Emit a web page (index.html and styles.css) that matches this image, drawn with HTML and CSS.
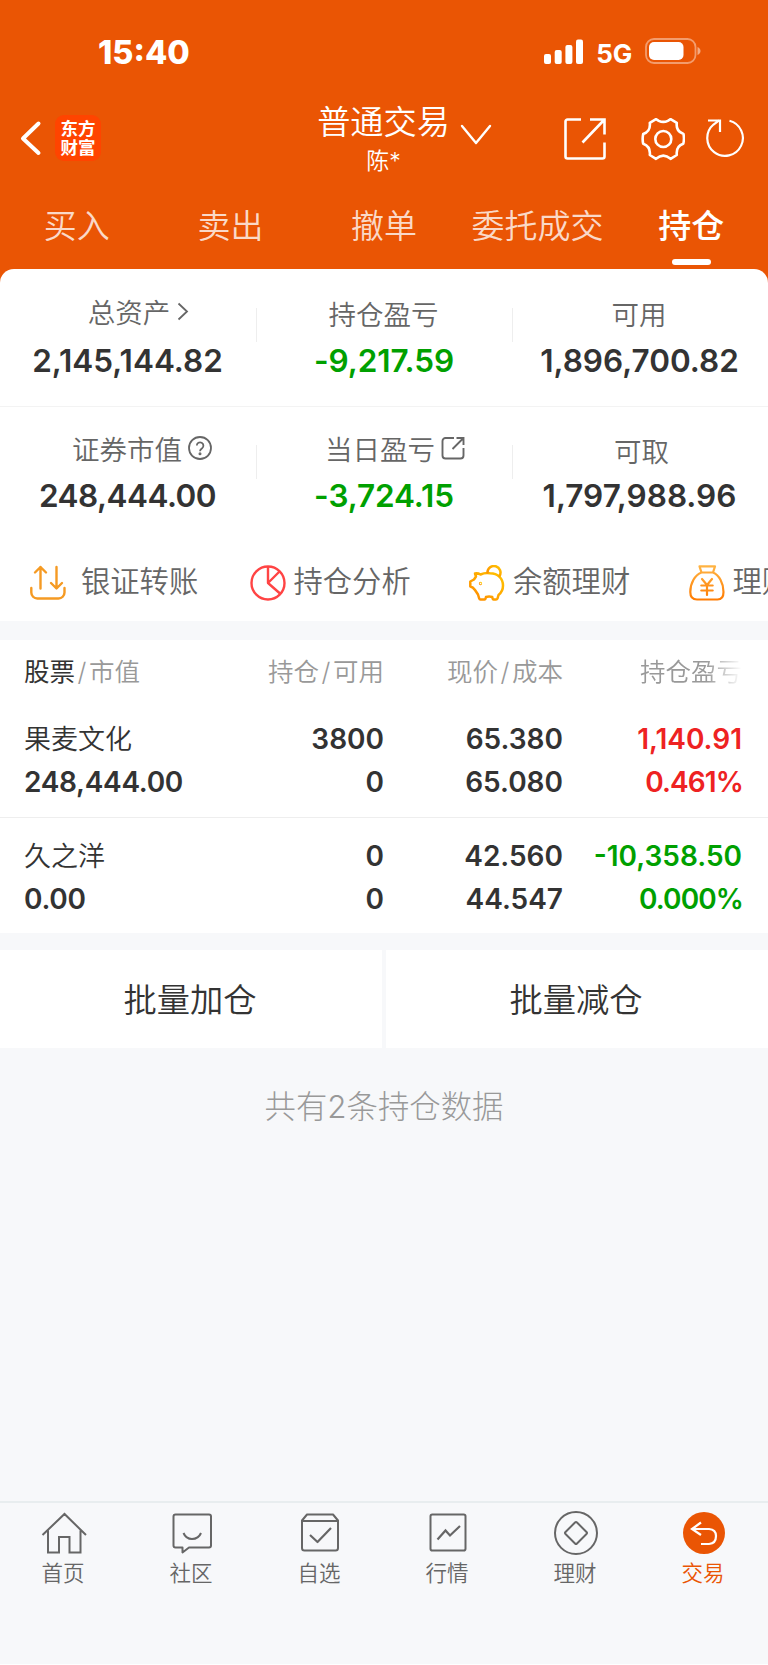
FILE: index.html
```html
<!DOCTYPE html>
<html lang="zh-CN">

<head>
  <meta charset="UTF-8">
  <title>普通交易 - 持仓</title>
  <link rel="stylesheet" href="styles.css">
</head>

<body>
  <div class="app">
    <header class="header">
      <div class="status">
        <span class="time">15:40</span>
        <div class="status-right">
          <svg class="signal" width="39" height="25" viewBox="0 0 39 25" fill="#fff">
            <rect x="0" y="15" width="7" height="10" rx="2" />
            <rect x="10.7" y="11" width="7" height="14" rx="2" />
            <rect x="21.4" y="6" width="7" height="19" rx="2" />
            <rect x="32" y="0.5" width="7" height="24.5" rx="2" />
          </svg>
          <span class="network">5G</span>
          <svg width="56" height="26" viewBox="0 0 56 26">
            <rect x="1" y="1" width="49.5" height="24" rx="8" fill="none" stroke="#fff" stroke-opacity=".42" stroke-width="1.8" />
            <rect x="4" y="4" width="34.5" height="18" rx="5" fill="#fff" />
            <path d="M52.5 9v8c4-1.500 4-6.500 0-8z" fill="#fff" fill-opacity=".5" />
          </svg>
        </div>
      </div>

      <nav class="navbar">
        <div class="nav-left">
          <svg width="22" height="36" viewBox="0 0 22 36" fill="none" stroke="#fff" stroke-width="4" stroke-linecap="round" stroke-linejoin="round">
            <path d="M18.500 3.500L3 18.500L18.500 33" />
          </svg>
          <div class="logo"><span>东方</span><span>财富</span></div>
        </div>
        <div class="nav-title">
          <div class="title">普通交易</div>
          <div class="user">陈*</div>
        </div>
        <svg class="caret" width="32" height="22" viewBox="0 0 32 22" fill="none" stroke="#fff" stroke-width="2.400" stroke-linecap="round" stroke-linejoin="round">
          <path d="M2 2l14 17L30 2" />
        </svg>
        <div class="nav-right">
          <svg class="share" width="42" height="42" viewBox="0 0 42 42" fill="none" stroke="#fff" stroke-width="2.600">
            <path d="M17 1.500H3.500a2 2 0 0 0-2 2V38.500a2 2 0 0 0 2 2H38.500a2 2 0 0 0 2-2V24.500M26 1.500H40.500V16.500M40 2L18.500 24.500" />
          </svg>
          <svg class="gear" width="44" height="44" viewBox="0 0 44 44" fill="none" stroke="#fff" stroke-width="2.600" stroke-linejoin="round">
            <path d="M15 2.200L17.800 3.800Q22.300 6 26.800 3.800L29.600 2.200L35.800 5.800Q34.800 13.800 41.200 16.200L42.500 17Q43.500 22 42.300 26.700Q34.800 29 35.800 38L29.600 41.800Q22.300 35.500 15 41.800L8.800 38Q9.800 29.500 2.200 26.700Q1.100 22 2.200 17Q9.800 14.500 8.800 5.800Z" />
            <circle cx="22.300" cy="22" r="8" />
          </svg>
          <svg width="40" height="40" viewBox="0 0 40 40" fill="none" stroke="#fff" stroke-width="2.200">
            <path d="M24.500 2.800A17.800 17.800 0 1 1 8.500 6.500L14.500 2.200M3 2.500H15V14" />
          </svg>
        </div>
      </nav>

      <div class="tabs">
        <div class="tab">买入</div>
        <div class="tab">卖出</div>
        <div class="tab">撤单</div>
        <div class="tab">委托成交</div>
        <div class="tab active">持仓</div>
      </div>
    </header>

    <section class="summary">
      <div class="stats">
        <div class="stat">
          <div class="label linked">总资产<svg class="arrow" width="12" height="19" viewBox="0 0 12 19" fill="none" stroke="#666" stroke-width="1.800"><path d="M1.500 1.500L10 9.500L1.500 17.500" /></svg></div>
          <div class="value">2,145,144.82</div>
        </div>
        <div class="stat">
          <div class="label">持仓盈亏</div>
          <div class="value green">-9,217.59</div>
        </div>
        <div class="stat">
          <div class="label">可用</div>
          <div class="value">1,896,700.82</div>
        </div>
      </div>
      <div class="stats">
        <div class="stat">
          <div class="label linked wide">证券市值<svg class="help" width="24" height="24" viewBox="0 0 24 24" fill="none" stroke="#666" stroke-width="1.800"><circle cx="12" cy="12" r="11" /><path d="M8.800 9.600a3.300 3.300 0 1 1 5.300 2.700c-1.500 1-2.100 1.600-2.100 3" /><circle cx="12" cy="17.800" r=".6" fill="#666" /></svg></div>
          <div class="value tight">248,444.00</div>
        </div>
        <div class="stat">
          <div class="label linked">当日盈亏<svg class="open" width="24" height="24" viewBox="0 0 24 24" fill="none" stroke="#666" stroke-width="1.900"><path d="M13 2H4.500a3 3 0 0 0-3 3V19.500a3 3 0 0 0 3 3H19.500a3 3 0 0 0 3-3V12M15.500 2H22.500V9M22 2.500L11.500 13" /></svg></div>
          <div class="value green">-3,724.15</div>
        </div>
        <div class="stat">
          <div class="label shifted">可取</div>
          <div class="value">1,797,988.96</div>
        </div>
      </div>

      <div class="shortcuts">
        <div class="shortcut transfer">
          <svg width="36" height="36" viewBox="0 0 36 36" fill="none" stroke="#f59a23" stroke-width="2.400" stroke-linecap="round" stroke-linejoin="round">
            <path d="M1.300 23v4.500a6 6 0 0 0 6 6H28.500a6 6 0 0 0 6-6V23M10.500 23.500V2M5 7.500L10.500 2L16 7.500M26.500 2V23M21 18L26.500 23.500L32 18" />
          </svg>
          <span>银证转账</span>
        </div>
        <div class="shortcut analysis">
          <svg width="36" height="36" viewBox="0 0 36 36" fill="none" stroke="#ff4444" stroke-width="2.400" stroke-linejoin="round">
            <circle cx="18" cy="18" r="16.500" />
            <path d="M18 1.500V18L29.500 6.500M18 18L30 28.500" />
          </svg>
          <span>持仓分析</span>
        </div>
        <div class="shortcut balance">
          <svg width="36" height="36" viewBox="0 0 36 36" fill="none" stroke="url(#gold)" stroke-width="2.500" stroke-linecap="round" stroke-linejoin="round">
            <defs>
              <linearGradient id="gold" x1="1" y1="0" x2="0" y2="1">
                <stop offset="0" stop-color="#ffc400" />
                <stop offset="1" stop-color="#ff8a00" />
              </linearGradient>
            </defs>
            <path d="M6 8.500Q9 8 11.500 9.500Q16 7.500 21 8.300C29 8.500 34 13.500 34 20.500Q34 26.500 29.500 30L28.500 33.500Q28 34.500 27 34.500H24.500Q23.500 34.500 23.300 32Q20 31 17 32Q16.500 34.500 15.500 34.500H11.500Q10.500 34.500 10.200 33.500L9 29.500L6 25Q4 22 1.300 21.500V16.500L5 14.500L7 11.500Z" />
            <path d="M18.500 7.500A6.500 6.500 0 1 1 30.500 11" />
            <circle cx="11.500" cy="18.500" r=".4" />
          </svg>
          <span>余额理财</span>
        </div>
        <div class="shortcut finance">
          <svg width="36" height="36" viewBox="0 0 36 36" fill="none" stroke="url(#bag)" stroke-width="2.200" stroke-linecap="round" stroke-linejoin="round">
            <defs>
              <linearGradient id="bag" gradientUnits="userSpaceOnUse" x1="18" y1="0" x2="18" y2="36">
                <stop offset="0" stop-color="#ffb545" />
                <stop offset="1" stop-color="#ff7a00" />
              </linearGradient>
            </defs>
            <path d="M10.500 1.300H26L24 7.500H12.500ZM12.500 7.500C6 10 1.300 18 1.300 27Q1.300 34.500 8 34.500H28.500Q34.500 34.500 34.500 27C34.500 18 30 10 24 7.500" />
            <path d="M13 14L18 20L23 14M12.300 20.500H23.700M12.300 25.500H23.700M18 20V30" />
          </svg>
          <span>理财</span>
        </div>
      </div>
    </section>

    <section class="holdings">
      <div class="row head">
        <div class="cell"><b>股票</b><i>/</i>市值</div>
        <div class="cell">持仓<i>/</i>可用</div>
        <div class="cell">现价<i>/</i>成本</div>
        <div class="cell fade">持仓盈亏</div>
      </div>
      <div class="row">
        <div class="cell"><div class="name">果麦文化</div><div>248,444.00</div></div>
        <div class="cell"><div>3800</div><div>0</div></div>
        <div class="cell"><div>65.380</div><div>65.080</div></div>
        <div class="cell red"><div>1,140.91</div><div class="rate">0.461%</div></div>
      </div>
      <div class="row">
        <div class="cell"><div class="name">久之洋</div><div>0.00</div></div>
        <div class="cell"><div>0</div><div>0</div></div>
        <div class="cell"><div>42.560</div><div>44.547</div></div>
        <div class="cell green"><div>-10,358.50</div><div class="rate">0.000%</div></div>
      </div>
    </section>

    <div class="batch">
      <div class="batch-btn">批量加仓</div>
      <div class="batch-btn">批量减仓</div>
    </div>

    <p class="total">共有2条持仓数据</p>

    <footer class="tabbar">
      <div class="item">
        <svg width="46" height="46" viewBox="0 0 46 46" fill="none" stroke="#666" stroke-width="2">
          <path d="M1.500 24L23.500 3L45 24M7 19.500V41.500H18V26H28.500V41.500H39.500V19.500" />
        </svg>
        <span>首页</span>
      </div>
      <div class="item">
        <svg width="46" height="46" viewBox="0 0 46 46" fill="none" stroke="#666" stroke-width="2" stroke-linejoin="round">
          <path d="M6.500 3.500H40a2 2 0 0 1 2 2V34.500a2 2 0 0 1-2 2H20L13.500 41.500V36.500H6.500a2 2 0 0 1-2-2V5.500a2 2 0 0 1 2-2z" />
          <path d="M14.500 22Q17 28 23 28Q29.500 28 32 22" />
        </svg>
        <span>社区</span>
      </div>
      <div class="item">
        <svg width="46" height="46" viewBox="0 0 46 46" fill="none" stroke="#666" stroke-width="2" stroke-linejoin="round">
          <path d="M5 10H41V37a2.500 2.500 0 0 1-2.500 2.500H7.500A2.500 2.500 0 0 1 5 37V9.500L10 3.500H36L41 9.500V11" />
          <path d="M13 24L20.500 31L34 17" stroke-width="2.200" />
        </svg>
        <span>自选</span>
      </div>
      <div class="item">
        <svg width="46" height="46" viewBox="0 0 46 46" fill="none" stroke="#666" stroke-width="2">
          <rect x="5.500" y="3.500" width="35" height="36" rx="1.800" />
          <path d="M12.500 28.500L20.500 19.500L25 24.500L35 15" stroke-width="2.200" />
        </svg>
        <span>行情</span>
      </div>
      <div class="item">
        <svg width="46" height="46" viewBox="0 0 46 46" fill="none" stroke="#666" stroke-width="2" stroke-linejoin="round">
          <circle cx="23" cy="22" r="21" />
          <path d="M22 11.500Q23 10.500 24 11.500L33.500 21Q34.500 22 33.500 23L24 32.500Q23 33.500 22 32.500L12.500 23Q11.500 22 12.500 21Z" />
        </svg>
        <span>理财</span>
      </div>
      <div class="item current">
        <svg width="46" height="46" viewBox="0 0 46 46" fill="none" stroke="#fff" stroke-width="2.200">
          <circle cx="23" cy="22" r="21" fill="#ea5504" stroke="none" />
          <path d="M20 11.500L11 18L20 24M11.500 18H28Q35 18.500 35 25Q35 32.500 28 33H20" />
        </svg>
        <span>交易</span>
      </div>
    </footer>
  </div>
</body>

</html>
```
FILE: styles.css
```css
body {
  margin: 0;
  background: #fff;
  color: #333;
  font-family: Inter, 'Noto Sans CJK SC', sans-serif;
}

.app {
  display: flex;
  flex-direction: column;
  width: 768px;
  height: 1664px;
  background: #f7f8fa;
}

svg {
  flex: none;
  display: block;
}

/* header */
.header {
  height: 269px;
  padding-bottom: 14px;
  background: #ea5504;
  color: #fff;
}

.status {
  display: flex;
  justify-content: space-between;
  height: 104px;
  box-sizing: border-box;
  padding: 38px 67px 0 98px;
}

.time {
  font-size: 32.5px;
  line-height: 29px;
  font-weight: 800;
}

.status-right {
  display: flex;
  align-items: flex-start;
  gap: 13px;
}

.signal {
  margin-top: 1px;
}

.network {
  font-size: 26px;
  line-height: 31px;
  font-weight: 700;
  letter-spacing: -.2px;
}

.navbar {
  display: flex;
  height: 90px;
}

.nav-left {
  display: flex;
  align-items: center;
  width: 297px;
  height: 46px;
  gap: 13px;
  padding: 11px 0 0 20px;
}

.logo {
  display: flex;
  flex-direction: column;
  justify-content: center;
  align-items: center;
  width: 46px;
  height: 46px;
  border-radius: 9px;
  background: #ff4400;
  font-size: 17.5px;
  line-height: 19px;
  font-weight: 700;
}

.nav-title {
  display: flex;
  flex-direction: column;
  align-items: center;
  width: 133px;
}

.title {
  font-size: 33.2px;
  line-height: 37px;
  font-weight: 350;
  white-space: nowrap;
}

.user {
  font-size: 23px;
  line-height: 28px;
  margin-top: 6px;
  font-weight: 350;
}

.caret {
  margin: 20px 0 0 10px;
}

.nav-right {
  display: flex;
  margin: 13px 0 0 72px;
}

.gear {
  margin-left: 35px;
}

.nav-right svg:last-child {
  margin: 1px 0 0 20px;
}

.share {
  margin-top: 1px;
}

.tabs {
  display: grid;
  grid-template-columns: repeat(5, 1fr);
}

.tab {
  display: flex;
  flex-direction: column;
  align-items: center;
  font-size: 33px;
  line-height: 64px;
  font-weight: 350;
  color: rgba(255, 255, 255, .78);
}

.tab.active {
  color: #fff;
  font-weight: 500;
}

.tab.active::after {
  content: '';
  width: 39px;
  height: 6px;
  margin-top: 1px;
  border-radius: 3px;
  background: #fff;
}

/* account summary */
.summary {
  height: 352px;
  margin-top: -14px;
  border-radius: 14px 14px 0 0;
  background: #fff;
  overflow: hidden;
}

.stats {
  display: grid;
  grid-template-columns: 257px 256px 255px;
  height: 138px;
  box-sizing: border-box;
  padding-top: 26px;
  border-bottom: 1px solid #f3f3f3;
}

.stats + .stats {
  height: 133px;
  padding-top: 25px;
  border-bottom: 0;
}

.stat {
  text-align: center;
  background: linear-gradient(#eee, #eee) right 13px / 1px 34px no-repeat;
}

.stat:last-child {
  background: none;
}

.label {
  display: flex;
  justify-content: center;
  align-items: center;
  height: 36px;
  padding-right: 3px;
  font-size: 27.5px;
  font-weight: 350;
  color: #666;
}

/* labels with a trailing icon sit a little right of the value */
.label.linked {
  height: 32px;
  padding: 0 0 4px 20px;
}

.label.wide {
  padding-left: 27px;
}

.label.shifted {
  padding: 0 0 0 2px;
}

.arrow {
  margin-left: 7px;
}

.help,
.open {
  margin-left: 6px;
}

.value {
  padding-right: 2px;
  font-size: 31.5px;
  line-height: 38px;
  margin-top: 11px;
  font-weight: 600;
}

.stats + .stats .value {
  margin-top: 9px;
}

.value.tight {
  letter-spacing: -.5px;
}

.value.green {
  letter-spacing: -.1px;
}

.green {
  color: #00a000;
}

.red {
  color: #ee2222;
}

.shortcuts {
  display: flex;
  padding: 22px 0 0 30px;
  white-space: nowrap;
}

.shortcut {
  display: flex;
  align-items: center;
  height: 42px;
  width: 219.500px;
  flex: none;
  gap: 8px;
  font-size: 29.3px;
  line-height: 38px;
  font-weight: 350;
  color: #666;
}

.shortcut span {
  padding-bottom: 2px;
}

.transfer {
  gap: 15px;
}

/* holdings table */
.holdings {
  height: 293px;
  margin-top: 19px;
  background: #fff;
}

.row {
  display: grid;
  grid-template-columns: 184px 176px 179px 179px;
  height: 116px;
  box-sizing: border-box;
  padding: 17px 26px 0 24px;
  border-top: 1px solid #eee;
  font-size: 28px;
  line-height: 43px;
  font-weight: 600;
}

.row:nth-child(2) {
  border-top: 0;
  height: 117px;
  padding-top: 18px;
}

.cell {
  text-align: right;
  white-space: nowrap;
}

.cell:first-child {
  text-align: left;
  letter-spacing: -.3px;
}

.cell .name {
  font-size: 27px;
  font-weight: 350;
  letter-spacing: 0;
}

.rate {
  letter-spacing: -.9px;
  margin-right: -1px;
}

.row.head {
  height: 60px;
  padding-top: 10px;
  border-top: 0;
  font-size: 25.5px;
  font-weight: 350;
  color: #999;
}

.row.head .cell {
  letter-spacing: 0;
}

.head b {
  font-weight: 400;
  color: #333;
}

.head i {
  font-style: normal;
  margin: 0 2.5px;
}

.head .fade {
  overflow: hidden;
  padding-left: 77px;
  text-align: left;
  -webkit-mask-image: linear-gradient(to right, #000 80%, transparent);
  mask-image: linear-gradient(to right, #000 80%, transparent);
}

.batch {
  display: grid;
  grid-template-columns: 1fr 1fr;
  gap: 4px;
  margin-top: 17px;
}

.batch-btn {
  height: 98px;
  padding-right: 2px;
  background: #fff;
  text-align: center;
  font-size: 33.3px;
  line-height: 100px;
  font-weight: 350;
}

.total {
  margin: 36px 0 0;
  text-align: center;
  font-size: 31.4px;
  line-height: 46px;
  font-weight: 300;
  color: #999;
}

/* bottom navigation */
.tabbar {
  display: grid;
  grid-template-columns: repeat(6, 128px);
  height: 163px;
  box-sizing: border-box;
  margin-top: auto;
  padding-top: 8px;
  border-top: 2px solid #e8edef;
}

.item {
  display: flex;
  flex-direction: column;
  align-items: center;
  gap: 1px;
  font-size: 21.5px;
  line-height: 30px;
  font-weight: 350;
  color: #666;
}

.item span {
  padding-right: 2px;
}

.item.current {
  color: #ea5504;
}
```
